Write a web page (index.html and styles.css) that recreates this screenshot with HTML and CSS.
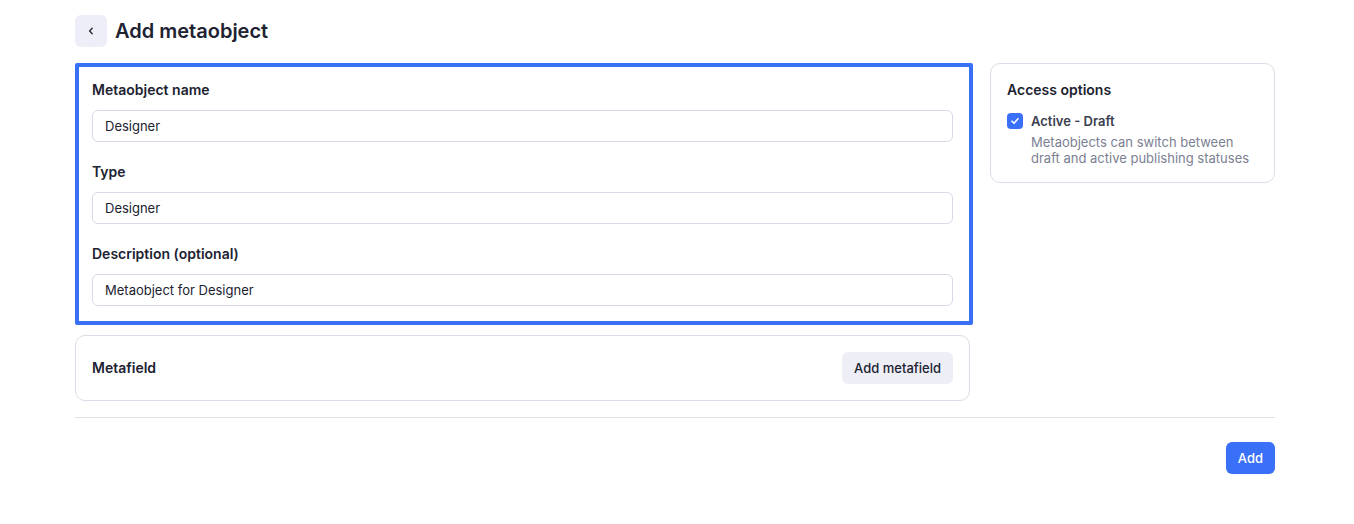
FILE: index.html
```html
<!DOCTYPE html>
<html lang="en">
<head>
<meta charset="utf-8">
<title>Add metaobject</title>
<link rel="stylesheet" href="styles.css">
</head>
<body>
<div class="page">
  <header class="header">
    <button class="back-btn" aria-label="Back">
      <svg width="12" height="12" viewBox="0 0 12 12" fill="none"><path d="M7.2 3.2L4.6 6l2.6 2.8" stroke="#2a2c3a" stroke-width="1.4" stroke-linecap="round" stroke-linejoin="round"/></svg>
    </button>
    <h1 class="title">Add metaobject</h1>
  </header>

  <div class="layout">
    <div class="main-col">
      <section class="card card-highlight">
        <div class="field">
          <label class="field-label">Metaobject name</label>
          <div class="input">Designer</div>
        </div>
        <div class="field">
          <label class="field-label">Type</label>
          <div class="input">Designer</div>
        </div>
        <div class="field">
          <label class="field-label">Description (optional)</label>
          <div class="input">Metaobject for Designer</div>
        </div>
      </section>

      <section class="card card-metafield">
        <span class="card-title">Metafield</span>
        <button class="btn-secondary">Add metafield</button>
      </section>
    </div>

    <aside class="side-col">
      <section class="card card-access">
        <h2 class="card-title">Access options</h2>
        <div class="check-row">
          <span class="checkbox">
            <svg width="10" height="10" viewBox="0 0 10 10" fill="none"><path d="M2 5.2l2 2 4-4.4" stroke="#fff" stroke-width="1.6" stroke-linecap="round" stroke-linejoin="round"/></svg>
          </span>
          <div class="check-text">
            <div class="check-label">Active - Draft</div>
            <div class="check-desc">Metaobjects can switch between draft and active publishing statuses</div>
          </div>
        </div>
      </section>
    </aside>
  </div>

  <hr class="divider">

  <div class="footer">
    <button class="btn-primary">Add</button>
  </div>
</div>
</body>
</html>
```

FILE: styles.css
```css
* { box-sizing: border-box; }

body {
  margin: 0;
  background: #ffffff;
  font-family: Inter, "Noto Sans", "Liberation Sans", sans-serif;
  color: #202231;
}

.page {
  width: 1200px;
  margin-left: 75px;
  padding-top: 15px;
}

.header {
  display: flex;
  align-items: center;
  gap: 8px;
  height: 32px;
}

.back-btn {
  width: 32px;
  height: 32px;
  border: none;
  border-radius: 6px;
  background: #eeeef8;
  display: flex;
  align-items: center;
  justify-content: center;
  padding: 0;
}

.title {
  margin: 0;
  font-size: 20px;
  font-weight: 600;
  line-height: 28px;
  color: #202231;
}

.layout {
  display: flex;
  gap: 17px;
  margin-top: 16px;
  align-items: flex-start;
}

.main-col {
  width: 898px;
  display: flex;
  flex-direction: column;
  gap: 10px;
}

.side-col {
  width: 285px;
}

.card {
  border: 1px solid #dcdde8;
  border-radius: 10px;
  background: #fff;
}

.card-highlight {
  border: 4px solid #3a6ff8;
  border-radius: 2px;
  padding: 13px 16px 15px 13px;
  display: flex;
  flex-direction: column;
  gap: 20px;
}

.field {
  display: flex;
  flex-direction: column;
  gap: 10px;
}

.field-label {
  font-size: 14px;
  line-height: 20px;
  font-weight: 600;
  color: #202231;
}

.input {
  height: 32px;
  border: 1px solid #d7d9e8;
  border-radius: 6px;
  padding: 0 12px;
  display: flex;
  align-items: center;
  font-size: 13px;
  color: #202231;
}

.card-metafield {
  width: 895px;
  padding: 16px;
  display: flex;
  align-items: center;
  justify-content: space-between;
}

.card-title {
  margin: 0;
  font-size: 14px;
  line-height: 20px;
  font-weight: 600;
  color: #202231;
}

.btn-secondary {
  height: 32px;
  padding: 0 12px;
  border: none;
  border-radius: 6px;
  background: #eeeef6;
  font-family: inherit;
  font-size: 13px;
  font-weight: 500;
  color: #202231;
}

.card-access {
  padding: 16px;
}

.check-row {
  display: flex;
  gap: 8px;
  margin-top: 11px;
}

.checkbox {
  width: 16px;
  height: 16px;
  margin-top: 2px;
  flex: none;
  border-radius: 4px;
  background: #3a6ff8;
  display: flex;
  align-items: center;
  justify-content: center;
}

.check-label {
  font-size: 13px;
  line-height: 20px;
  font-weight: 600;
  color: #3b3e4e;
}

.check-desc {
  margin-top: 3px;
  font-size: 13px;
  line-height: 16px;
  color: #7b8092;
}

.divider {
  margin: 16px 0 0;
  border: none;
  border-top: 1px solid #dfe0e8;
}

.footer {
  display: flex;
  justify-content: flex-end;
  margin-top: 24px;
}

.btn-primary {
  height: 32px;
  padding: 0 12px;
  border: none;
  border-radius: 6px;
  background: #3a6ff8;
  color: #fff;
  font-family: inherit;
  font-size: 13px;
  font-weight: 500;
}
```
